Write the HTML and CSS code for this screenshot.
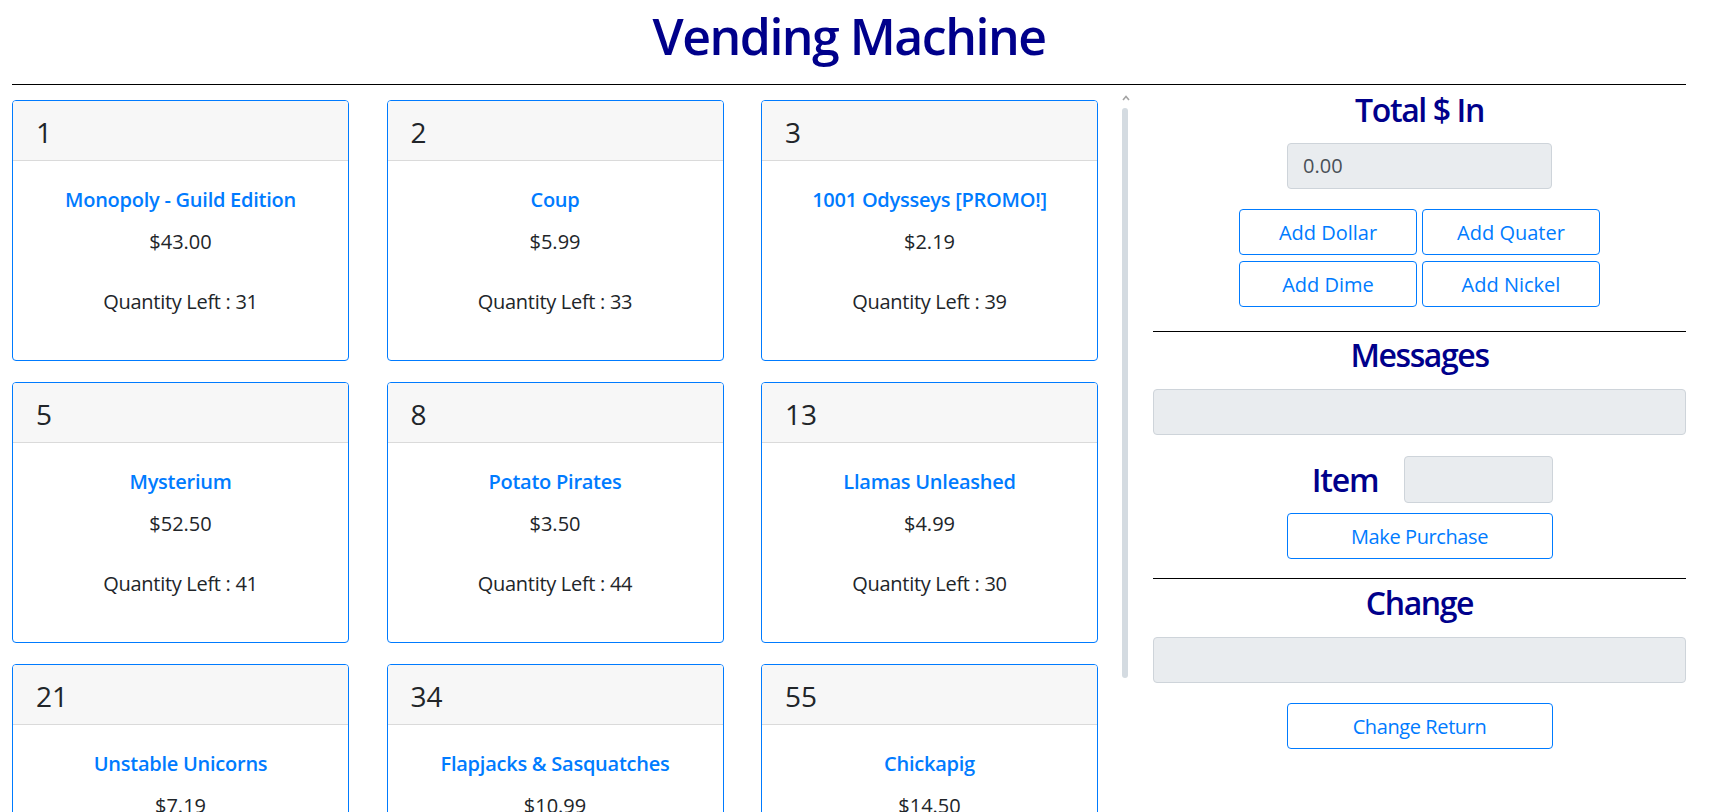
FILE: index.html
```html
<!DOCTYPE html>
<html lang="en">
<head>
<meta charset="utf-8">
<title>Vending Machine</title>
<link rel="stylesheet" href="styles.css">
</head>
<body>
<div class="page">
  <h1 class="title">Vending Machine</h1>
  <hr class="rule">
  <div class="main">
    <div class="items">
      <div class="card"><div class="card-header">1</div><div class="card-body"><div class="name">Monopoly - Guild Edition</div><div class="price">$43.00</div><div class="qty">Quantity Left : 31</div></div></div>
      <div class="card"><div class="card-header">2</div><div class="card-body"><div class="name">Coup</div><div class="price">$5.99</div><div class="qty">Quantity Left : 33</div></div></div>
      <div class="card"><div class="card-header">3</div><div class="card-body"><div class="name">1001 Odysseys [PROMO!]</div><div class="price">$2.19</div><div class="qty">Quantity Left : 39</div></div></div>
      <div class="card"><div class="card-header">5</div><div class="card-body"><div class="name">Mysterium</div><div class="price">$52.50</div><div class="qty">Quantity Left : 41</div></div></div>
      <div class="card"><div class="card-header">8</div><div class="card-body"><div class="name">Potato Pirates</div><div class="price">$3.50</div><div class="qty">Quantity Left : 44</div></div></div>
      <div class="card"><div class="card-header">13</div><div class="card-body"><div class="name">Llamas Unleashed</div><div class="price">$4.99</div><div class="qty">Quantity Left : 30</div></div></div>
      <div class="card"><div class="card-header">21</div><div class="card-body"><div class="name">Unstable Unicorns</div><div class="price">$7.19</div><div class="qty">Quantity Left : 36</div></div></div>
      <div class="card"><div class="card-header">34</div><div class="card-body"><div class="name">Flapjacks &amp; Sasquatches</div><div class="price">$10.99</div><div class="qty">Quantity Left : 42</div></div></div>
      <div class="card"><div class="card-header">55</div><div class="card-body"><div class="name">Chickapig</div><div class="price">$14.50</div><div class="qty">Quantity Left : 38</div></div></div>
    </div>
    <div class="scroll">
      <svg class="scroll-arrow" width="8" height="6" viewBox="0 0 8 6"><path d="M1 5 L4 1.5 L7 5" fill="none" stroke="#a3a3a3" stroke-width="1.6"/></svg>
      <div class="scroll-thumb"></div>
    </div>
    <div class="panel">
      <h2 class="heading h-total">Total $ In</h2>
      <div class="field field-mid">0.00</div>
      <div class="coins">
        <button class="btn">Add Dollar</button>
        <button class="btn">Add Quater</button>
        <button class="btn">Add Dime</button>
        <button class="btn">Add Nickel</button>
      </div>
      <hr class="rule rule-panel r1">
      <h2 class="heading h-msg">Messages</h2>
      <div class="field field-wide"></div>
      <div class="item-row">
        <span class="item-label">Item</span>
        <div class="field field-item"></div>
      </div>
      <button class="btn btn-wide btn-purchase">Make Purchase</button>
      <hr class="rule rule-panel r2">
      <h2 class="heading h-change">Change</h2>
      <div class="field field-wide"></div>
      <button class="btn btn-wide btn-return">Change Return</button>
    </div>
  </div>
</div>
</body>
</html>
```

FILE: styles.css
```css
* { box-sizing: border-box; }
html, body { margin: 0; padding: 0; background: #fff; }
body {
  font-family: "Open Sans", "Noto Sans", sans-serif;
  color: #212529;
}
.page {
  height: 100vh;
  overflow: hidden;
  padding: 0 24px 0 12px;
}
.title {
  margin: 6px 0 0;
  font-size: 50px;
  line-height: 60px;
  font-weight: 550;
  letter-spacing: -1.5px;
  text-align: center;
  color: #00008b;
}
.rule {
  margin: 18px 0 0;
  border: 0;
  border-top: 1px solid #000;
  height: 0;
}
.main {
  display: flex;
  align-items: flex-start;
}
.items {
  width: 1086px;
  flex: none;
  display: grid;
  grid-template-columns: repeat(3, 1fr);
  column-gap: 37.5px;
  row-gap: 21px;
  padding-top: 15px;
}
.card {
  height: 261px;
  border: 1px solid #007bff;
  border-radius: 4px;
  overflow: hidden;
  display: flex;
  flex-direction: column;
}
.card-header {
  height: 60px;
  flex: none;
  background: #f7f7f7;
  border-bottom: 1px solid #dadada;
  padding: 2px 23px 0;
  font-size: 28px;
  line-height: 58px;
  color: #212529;
}
.card-body {
  padding: 27px 16px 0;
  text-align: center;
  font-size: 20px;
  line-height: 24px;
}
.name { color: #007bff; font-weight: 600; letter-spacing: -0.25px; }
.price { margin-top: 18px; }
.qty { margin-top: 36px; letter-spacing: -0.3px; }
.scroll {
  flex: none;
  width: 6px;
  margin: 0 25px 0 24px;
  display: flex;
  flex-direction: column;
  align-items: center;
  padding-top: 10px;
}
.scroll-arrow { display: block; margin-left: 1px; }
.scroll-thumb {
  width: 6px;
  height: 570px;
  margin-top: 7px;
  background: #d4dbe1;
  border-radius: 3px;
}
.panel {
  flex: 1;
  display: flex;
  flex-direction: column;
  align-items: center;
}
.heading {
  margin: 0;
  font-size: 32px;
  line-height: 38px;
  font-weight: 600;
  letter-spacing: -1.4px;
  color: #00008b;
  text-align: center;
}
.h-total { margin-top: 6px; }
.field {
  height: 46px;
  background: #e9ecef;
  border: 1px solid #ced4da;
  border-radius: 4px;
  font-size: 20px;
  line-height: 44px;
  color: #495057;
}
.field-mid { width: 265px; margin-top: 14px; padding: 0 15px; }
.field-wide { width: 100%; margin-top: 15px; }
.coins {
  margin-top: 20px;
  display: grid;
  grid-template-columns: 178px 178px;
  column-gap: 5px;
  row-gap: 6px;
}
.btn {
  height: 46px;
  background: #fff;
  border: 1px solid #007bff;
  border-radius: 4px;
  color: #007bff;
  font-family: inherit;
  font-size: 20px;
  padding: 0;
}
.rule-panel { width: 100%; }
.r1 { margin-top: 24px; }
.h-msg { margin-top: 4px; }
.item-row {
  width: 266px;
  margin-top: 21px;
  display: flex;
  align-items: center;
}
.item-label {
  width: 117px;
  text-align: center;
  font-size: 32px;
  line-height: 38px;
  font-weight: 600;
  letter-spacing: -1.2px;
  color: #00008b;
}
.field-item { width: 149px; height: 47px; }
.btn-wide { width: 266px; }
.btn-purchase { margin-top: 10px; letter-spacing: -0.4px; }
.r2 { margin-top: 19px; }
.h-change { margin-top: 5px; }
.btn-return { margin-top: 20px; letter-spacing: -0.4px; }
```
